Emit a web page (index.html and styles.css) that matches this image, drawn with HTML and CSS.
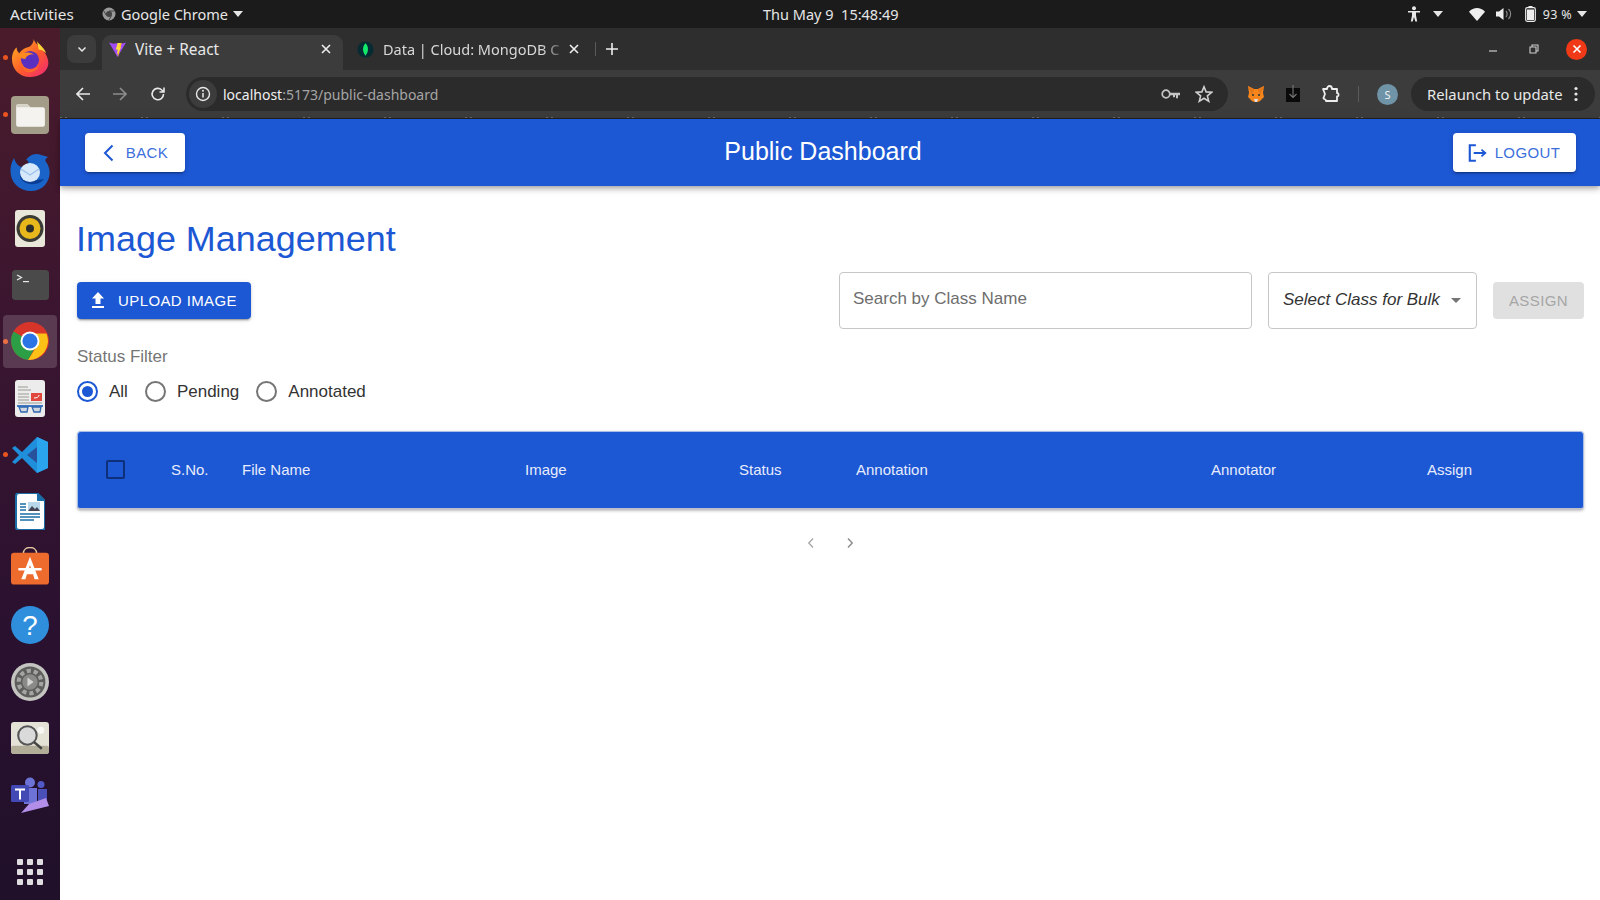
FILE: index.html
```html
<!DOCTYPE html>
<html lang="en">
<head>
<meta charset="utf-8">
<title>Vite + React</title>
<link rel="stylesheet" href="styles.css">
</head>
<body>
<div class="screen">
  <header class="topbar">
    <span class="activities">Activities</span>
    <span class="appmenu">
      <svg class="ic14" viewBox="0 0 14 14"><circle cx="7" cy="7" r="6.5" fill="#9a9a9a"/><circle cx="7" cy="7" r="3" fill="#444"/><path d="M7 4h5.5M9.5 8.5 7 13M4.4 8.5 1.6 3.6" stroke="#444" stroke-width="1"/></svg>
      <span>Google Chrome</span>
      <i class="caret"></i>
    </span>
    <time class="clock">Thu May 9&nbsp; 15:48:49</time>
    <span class="tray">
      <svg class="person" viewBox="0 0 14 16"><circle cx="7" cy="2.2" r="2" fill="#e8e8e8"/><path d="M1 5h12v1.6H9v3l1.2 6H8.3L7 11l-1.3 4.600H3.800L5 9.600v-3H1z" fill="#e8e8e8"/></svg>
      <i class="caret caret-a"></i>
      <svg class="wifi" viewBox="0 0 16 13"><path d="M0 3.800C4.500-1.200 11.500-1.200 16 3.800L8 13z" fill="#eee"/></svg>
      <svg class="speaker" viewBox="0 0 17 14"><path d="M0 4.500h3L7.500 1v12L3 9.500H0z" fill="#eee"/><path d="M10 4c1.500 1.600 1.500 4.400 0 6M12.500 2c2.800 2.800 2.800 7.200 0 10" stroke="#888" stroke-width="1.200" fill="none"/></svg>
      <svg class="battery" viewBox="0 0 11 16"><rect x=".7" y="1.700" width="9.600" height="13.600" rx="1.500" fill="none" stroke="#eee" stroke-width="1.200"/><rect x="3.500" y="0" width="4" height="2" fill="#eee"/><rect x="2" y="3.500" width="7" height="10.500" fill="#eee"/></svg>
      <span class="batt">93 %</span>
      <i class="caret caret-b"></i>
    </span>
  </header>

  <div class="desktop">
    <nav class="dock">
      <div class="dock-item has-dot">
        <svg viewBox="0 0 40 40"><defs><linearGradient id="ffa" x1="0" y1="0" x2="1" y2="1"><stop offset="0" stop-color="#ffb51f"/><stop offset=".55" stop-color="#ff5a2c"/><stop offset="1" stop-color="#f0257a"/></linearGradient></defs><path d="M24 0c1 5 6 7 9 11 6 7 7 13 6 17-2 8-10 12-19 12C9 40 1 32 1 21 1 16 3 11 6 9c0 3 1 5 3 6 2-4 7-6 11-7 2-2 4-5 4-8z" fill="url(#ffa)"/><path d="M27 2c3 4 8 7 10 13-3-3-6-4-8-4 0-3-1-6-2-9z" fill="#ffd43a"/><circle cx="20" cy="22" r="9.500" fill="#5b2fc0"/><path d="M7 17c5-3 12-4 17-1-5 0-8 2-9 5-3 0-6-2-8-4z" fill="#ff8a1f"/><path d="M11 24c1 6 7 9 12 8 4-1 6-4 6-7 1 6-4 10-10 10-5 0-9-5-8-11z" fill="#ff6a2a"/></svg>
      </div>
      <div class="dock-item has-dot">
        <svg viewBox="0 0 37 37"><rect width="37" height="37" rx="4" fill="#a39c89"/><path d="M5 10a2 2 0 0 1 2-2h9l3 3h12a2 2 0 0 1 2 2v15a2 2 0 0 1-2 2H7a2 2 0 0 1-2-2z" fill="#f5f3ef"/><path d="M5 10a2 2 0 0 1 2-2h9l3 3H5z" fill="#d6d2c8"/></svg>
      </div>
      <div class="dock-item">
        <svg class="drop2" viewBox="0 0 40 38"><path d="M4 4C-1 12-1 24 6 31c8 8 22 8 29 0 6-7 6-17 1-23-1-2-1-3 2-5-4-1-8-3-12-3-4 0-8 3-10 6 5 1 1 7-3 7-5 0-8-5-9-9z" fill="#1a63c9"/><path d="M12 16c3 6 10 12 22 9-4 6-15 7-21 2-4-3-4-8-1-11z" fill="#0a3e96"/><ellipse cx="20" cy="18.500" rx="10" ry="9.500" fill="#d6e8fa"/><path d="M11 15l9 6 9-6" fill="none" stroke="#9cc2ec" stroke-width="1.300"/></svg>
      </div>
      <div class="dock-item">
        <svg class="w30" viewBox="0 0 30 37"><rect width="30" height="37" rx="3" fill="#e9e6da"/><circle cx="15" cy="18.500" r="13.500" fill="#3a3a36"/><circle cx="15" cy="18.500" r="10.500" fill="#e8b71b"/><circle cx="15" cy="18.500" r="4" fill="#2c2c28"/></svg>
      </div>
      <div class="dock-item">
        <svg class="h30" viewBox="0 0 37 30"><rect width="37" height="30" rx="3.500" fill="#4a4a4a"/><path d="M5 5l4.500 2.500L5 10" fill="none" stroke="#e8e8e8" stroke-width="1.200"/><rect x="11" y="11" width="6" height="1.200" fill="#e8e8e8"/></svg>
      </div>
      <div class="dock-item active has-dot">
        <svg viewBox="0 0 40 40"><circle cx="20" cy="20" r="20" fill="#d8352a"/><path d="M2.700 10 12 27 20 20 2.700 10zM2.700 10A20 20 0 0 0 18 39.900L27 24 12 27z" fill="#2c9e46"/><path d="M20 12h17.300A20 20 0 0 1 18 39.900L28 24z" fill="#fbc116"/><circle cx="20" cy="20" r="10" fill="#fff"/><circle cx="20" cy="20" r="8" fill="#2a74e6"/></svg>
      </div>
      <div class="dock-item">
        <svg class="w30" viewBox="0 0 30 37"><rect width="30" height="37" rx="3" fill="#ececec"/><path d="M3 7h10M3 10h13M3 14h11M3 17h11M3 20h11M3 23h24" stroke="#9a9a94" stroke-width="1"/><rect x="16" y="13" width="11" height="8" fill="#e0483e"/><path d="M19 18c3 0 5-1 5-3" stroke="#fff" fill="none"/><rect x="2" y="25" width="26" height="2" fill="#3f78c0"/><path d="M4 27h9l-1 5H6zM17 27h9l-1 5h-6z" fill="#cfd8e0" stroke="#2f66ae" stroke-width="1.300"/></svg>
      </div>
      <div class="dock-item has-dot">
        <svg class="w36" viewBox="0 0 36 36"><path d="M25 0 36 5v26l-11 5L10 21 3 27 0 25l7-7-7-7 3-2 7 6z" fill="#1f8fdc"/><path d="M25 0 36 5v26l-11 5z" fill="#2aa4ec"/><path d="M25 10v16l-10-8z" fill="#31115a" opacity=".5"/></svg>
      </div>
      <div class="dock-item">
        <svg class="w30" viewBox="0 0 30 37"><path d="M1 3a3 3 0 0 1 3-3h18l8 8v26a3 3 0 0 1-3 3H4a3 3 0 0 1-3-3z" fill="#fff" stroke="#1a6ea5" stroke-width="2"/><path d="M22 0v8h8z" fill="#1a6ea5"/><path d="M5 11h6M5 14h6M5 17h6M5 21h20M5 24h20M5 27h14" stroke="#1a6ea5" stroke-width="1.500"/><rect x="13" y="9" width="12" height="9" fill="#b9d7ea"/><path d="M13 18l4-5 3 3 2-2 3 4z" fill="#445"/></svg>
      </div>
      <div class="dock-item">
        <svg class="lift" viewBox="0 0 37 36"><path d="M12 6c0-8 13-8 13 0" fill="none" stroke="#e5c9a0" stroke-width="1.500"/><rect y="5" width="37" height="31" rx="3" fill="#ee6b2e"/><path d="M18.500 9 10 31h4l1.500-5h6l1.500 5h4zM17 22l1.500-5 1.500 5z" fill="#fff"/><rect x="7" y="20" width="23" height="2.500" rx="1" fill="#fff"/></svg>
      </div>
      <div class="dock-item">
        <svg viewBox="0 0 37 37"><circle cx="18.500" cy="18.500" r="18.500" fill="#2f8fdc"/><text x="18.500" y="28" class="helpq" text-anchor="middle">?</text></svg>
      </div>
      <div class="dock-item">
        <svg viewBox="0 0 37 37"><circle cx="18.500" cy="18.500" r="18.500" fill="#c4c4c0"/><circle cx="18.500" cy="18.500" r="15" fill="#5e5e5c"/><circle cx="18.500" cy="18.500" r="11" fill="none" stroke="#a5a5a2" stroke-width="4" stroke-dasharray="4 2.900"/><circle cx="18.500" cy="18.500" r="7.500" fill="#8a8a88"/><path d="M16 14l6 4.500-6 4.500z" fill="#d4d4d0"/></svg>
      </div>
      <div class="dock-item">
        <svg viewBox="0 0 37 31"><rect width="37" height="31" rx="3" fill="#e4e1d6"/><rect y="23" width="37" height="8" rx="2" fill="#b2ad99"/><circle cx="16" cy="13" r="9" fill="#dadada" stroke="#555" stroke-width="2"/><path d="M22.500 19.500 30 26" stroke="#444" stroke-width="2.500"/><circle cx="29" cy="8" r="3.500" fill="#fff" opacity=".7"/></svg>
      </div>
      <div class="dock-item">
        <svg viewBox="0 0 38 36"><circle cx="19" cy="5.500" r="5" fill="#6c72d6"/><circle cx="30" cy="7.500" r="3.500" fill="#5158c8"/><path d="M13 11h13v16H13z" fill="#6c72d6"/><path d="M27 12h9v12h-9z" fill="#4a50b8"/><rect y="8" width="18" height="17" rx="1.500" fill="#4349b4"/><path d="M4 11.500h10v2H10v9H8v-9H4z" fill="#fff"/><path d="M10 36 38 29 35 21 18 27z" fill="#b28ee8"/></svg>
      </div>
      <div class="dock-grid">
        <i></i><i></i><i></i><i></i><i></i><i></i><i></i><i></i><i></i>
      </div>
    </nav>

    <div class="browser">
      <div class="tabstrip">
        <span class="tabmenu"><svg class="ic10" viewBox="0 0 10 10"><path d="M1.500 3.500 5 7l3.500-3.500" fill="none" stroke="#e8e8e8" stroke-width="1.500"/></svg></span>
        <div class="tab tab-active">
          <svg class="fav" viewBox="0 0 18 18"><path d="M0 1.500 9 17 18 1.500 13 3 9 2 5 3z" fill="#a14bf5"/><path d="M9 2h4.500L9.500 17z" fill="#ffc517"/><path d="M9.500 2 7 9h2.500L8 15l5-8.500H10.500L12 2z" fill="#ffdf3a"/></svg>
          <span class="tab-title">Vite + React</span>
          <svg class="tabx" viewBox="0 0 10 10"><path d="M1 1l8 8M9 1 1 9" stroke="#eee" stroke-width="1.600"/></svg>
        </div>
        <div class="tab tab-other">
          <svg class="fav" viewBox="0 0 18 18"><circle cx="9" cy="9" r="8.500" fill="#062b33"/><path d="M9 2.500c3.500 3.500 3.500 9 0 13-3.500-4-3.500-9.500 0-13z" fill="#13e86b"/></svg>
          <span class="tab-title faded">Data | Cloud: MongoDB C</span>
          <svg class="tabx" viewBox="0 0 10 10"><path d="M1 1l8 8M9 1 1 9" stroke="#eee" stroke-width="1.600"/></svg>
        </div>
        <svg class="newtab" viewBox="0 0 12 12"><path d="M6 0v12M0 6h12" stroke="#eee" stroke-width="1.600"/></svg>
        <div class="winctl">
          <svg class="ic10" viewBox="0 0 10 10"><path d="M1 7h8" stroke="#ccc" stroke-width="1.200"/></svg>
          <svg class="ic10" viewBox="0 0 10 10"><path d="M3 3V1h6v6H7M1 3h6v6H1z" fill="none" stroke="#ccc" stroke-width="1.100"/></svg>
          <span class="winclose"><svg class="ic10" viewBox="0 0 10 10"><path d="M1.500 1.500l7 7M8.500 1.500l-7 7" stroke="#fff" stroke-width="1.600"/></svg></span>
        </div>
      </div>

      <div class="toolbar">
        <svg class="nav-ic" viewBox="0 0 16 16"><path d="M15 8H2M8 2 2 8l6 6" fill="none" stroke="#e8e8e8" stroke-width="1.700"/></svg>
        <svg class="nav-ic" viewBox="0 0 16 16"><path d="M1 8h13M8 2l6 6-6 6" fill="none" stroke="#8c8c8c" stroke-width="1.700"/></svg>
        <svg class="nav-ic nudge" viewBox="0 0 16 16"><path d="M13.500 8A5.700 5.700 0 1 1 11.800 4L14 6M14 1.500V6H9.500" fill="none" stroke="#e8e8e8" stroke-width="1.600"/></svg>
        <div class="omnibox">
          <span class="sitechip"><svg class="ic16" viewBox="0 0 16 16"><circle cx="8" cy="8" r="6.500" fill="none" stroke="#e8e8e8" stroke-width="1.400"/><path d="M8 7v4.500" stroke="#e8e8e8" stroke-width="1.500"/><circle cx="8" cy="4.800" r="1" fill="#e8e8e8"/></svg></span>
          <span class="url"><b>localhost</b>:5173/public-dashboard</span>
          <svg class="key" viewBox="0 0 20 12"><circle cx="5" cy="6" r="3.800" fill="none" stroke="#c4c4c4" stroke-width="1.700"/><path d="M9 4.800h10v2.400h-2v3h-2v-3h-1v2h-2v-2H9z" fill="#c4c4c4"/></svg>
          <svg class="star" viewBox="0 0 18 18"><path d="M9 1.800 11.100 6.900 16.600 7.300 12.400 10.900 13.700 16.200 9 13.300 4.300 16.200 5.600 10.900 1.400 7.300 6.900 6.900z" fill="none" stroke="#d0d0d0" stroke-width="1.600"/></svg>
        </div>
        <svg class="ext fox" viewBox="0 0 18 18"><path d="M1 1l6 3h4l6-3-1 7 1 4-4 4-2 1H7l-2-1-4-4 1-4z" fill="#f6851b"/><path d="M1 1l6 3-2 6zM17 1l-6 3 2 6z" fill="#e2761b"/><path d="M7 14h4l-1 3H8z" fill="#ddd"/><circle cx="6" cy="10" r="1" fill="#233"/><circle cx="12" cy="10" r="1" fill="#233"/></svg>
        <svg class="ext dl" viewBox="0 0 18 18"><rect x="2" y="3" width="14" height="14" fill="#0a0a0a"/><path d="M9 0v12M5.500 9 9 12.500 12.500 9" fill="none" stroke="#777" stroke-width="1.100"/></svg>
        <svg class="ext puzzle" viewBox="0 0 20 20"><path d="M3 5h4c0-4 5-4 5 0h5v4c2-.5 2 4 0 3.500V17H6c.5-2-3-2-2.500-3L5 10z" fill="none" stroke="#eee" stroke-width="1.800" stroke-linejoin="round"/></svg>
        <i class="tdiv"></i>
        <span class="avatar">S</span>
        <div class="relaunch">
          <span>Relaunch to update</span>
          <svg class="dots" viewBox="0 0 4 16"><circle cx="2" cy="2.500" r="1.600" fill="#e8e8e8"/><circle cx="2" cy="8" r="1.600" fill="#e8e8e8"/><circle cx="2" cy="13.500" r="1.600" fill="#e8e8e8"/></svg>
        </div>
      </div>

      <main class="page">
        <div class="appbar">
          <button class="btn btn-white btn-back">
            <svg class="back-ic" viewBox="0 0 12 18"><path d="M10.500 1.500 3 9l7.500 7.500" fill="none" stroke="#1c57d4" stroke-width="2"/></svg>
            BACK
          </button>
          <div class="appbar-title">Public Dashboard</div>
          <button class="btn btn-white btn-logout">
            <svg class="logout-ic" viewBox="0 0 18 18"><path d="M8 2H2.500v14H8" fill="none" stroke="#1c57d4" stroke-width="1.900"/><path d="M6 9h10M13 6l3.500 3-3.500 3" fill="none" stroke="#1c57d4" stroke-width="1.600"/></svg>
            LOGOUT
          </button>
        </div>

        <div class="content">
          <h1 class="heading">Image Management</h1>
          <div class="actions">
            <button class="btn btn-blue">
              <svg class="up-ic" viewBox="0 0 14 16"><path d="M7 0 13 6.500H9.500V12h-5V6.500H1zM1 14h12v2H1z" fill="#fff"/></svg>
              UPLOAD IMAGE
            </button>
            <div class="actions-right">
              <div class="field field-search">Search by Class Name</div>
              <div class="field field-select"><em>Select Class for Bulk</em><i class="drop"></i></div>
              <button class="btn btn-disabled">ASSIGN</button>
            </div>
          </div>

          <div class="filter-label">Status Filter</div>
          <div class="radios">
            <label class="radio on"><i class="dot"></i>All</label>
            <label class="radio"><i class="dot"></i>Pending</label>
            <label class="radio"><i class="dot"></i>Annotated</label>
          </div>

          <div class="table">
            <div class="cell cell-check"><i class="check"></i></div>
            <div class="cell">S.No.</div>
            <div class="cell">File Name</div>
            <div class="cell">Image</div>
            <div class="cell">Status</div>
            <div class="cell">Annotation</div>
            <div class="cell">Annotator</div>
            <div class="cell">Assign</div>
          </div>

          <div class="pager">
            <svg class="pg" viewBox="0 0 10 12"><path d="M7 1.500 2.800 6 7 10.500" fill="none" stroke="#a8a8a8" stroke-width="1.400"/></svg>
            <svg class="pg" viewBox="0 0 10 12"><path d="M3 1.500 7.200 6 3 10.500" fill="none" stroke="#8a8a8a" stroke-width="1.400"/></svg>
          </div>
        </div>
      </main>
    </div>
  </div>
</div>
</body>
</html>
```

FILE: styles.css
```css
* { box-sizing: border-box; }
html, body { margin: 0; height: 100%; overflow: hidden; }
body { font-family: "Liberation Sans", Arial, sans-serif; background: #fff; }
.screen { width: 1600px; height: 900px; display: flex; flex-direction: column; }

/* GNOME top bar */
.topbar { height: 28px; flex: none; background: #1b1b1b; color: #e6e6e6; display: flex; align-items: center; padding-left: 10px; font-family: "Noto Sans", sans-serif; font-size: 14.500px; }
.activities { width: 92px; flex: none; font-size: 15.300px; }
.appmenu { display: flex; align-items: center; gap: 5px; flex: none; }
.ic14 { width: 14px; height: 14px; }
.caret { display: inline-block; width: 0; height: 0; border-left: 5.500px solid transparent; border-right: 5.500px solid transparent; border-top: 6px solid #e6e6e6; }
.clock { margin-left: 520px; width: 150px; flex: none; white-space: nowrap; }
.tray { margin-left: auto; display: flex; align-items: center; padding-right: 13px; }
.person { width: 14px; height: 16px; }
.caret-a { margin-left: 12px; }
.wifi { width: 16px; height: 13px; margin-left: 26px; }
.speaker { width: 17px; height: 14px; margin-left: 11px; }
.battery { width: 11px; height: 16px; margin-left: 12px; }
.batt { margin-left: 7px; font-size: 12.500px; letter-spacing: .3px; }
.caret-b { margin-left: 5px; }

.desktop { flex: 1; display: flex; min-height: 0; }

/* Dock */
.dock { width: 60px; flex: none; display: flex; flex-direction: column; padding-top: 1.650px; background: linear-gradient(180deg, #4a1c2b 0%, #3a1530 35%, #2a1130 70%, #201029 100%); }
.dock-item { height: 56.700px; flex: none; display: flex; align-items: center; justify-content: center; position: relative; }
.dock-item svg { width: 38px; height: 38px; }
.dock-item svg.w30 { width: 30px; height: 37px; }
.dock-item svg.h30 { width: 37px; height: 30px; }
.dock-item svg.w36 { width: 36px; height: 36px; }
.dock-item svg.lift { margin-bottom: 5px; }
.dock-item svg.drop2 { width: 40px; height: 38px; margin-top: 3px; }
.has-dot::before { content: ""; position: absolute; left: 3px; top: 50%; width: 5px; height: 5px; margin-top: -2.500px; border-radius: 50%; background: #e95420; }
.dock-item.active::after { content: ""; position: absolute; left: 3px; right: 3px; top: 2px; bottom: 2px; border-radius: 4px; background: rgba(255,255,255,.16); z-index: 0; }
.dock-item.active svg { position: relative; z-index: 1; }
.helpq { font-family: "Liberation Sans", sans-serif; font-size: 27px; fill: #fff; }
.dock-grid { margin: auto auto 15px; display: grid; grid-template-columns: repeat(3, 6px); gap: 4px; }
.dock-grid i { width: 6px; height: 6px; border-radius: 1px; background: #e0dde0; }

/* Browser */
.browser { flex: 1; min-width: 0; display: flex; flex-direction: column; }
.tabstrip { height: 42px; flex: none; background: #2e2e2e; display: flex; align-items: flex-end; padding-left: 7px; color: #e8e8e8; font-family: "Noto Sans", sans-serif; font-size: 14.500px; }
.tabmenu { width: 29px; height: 28px; margin-bottom: 7px; border-radius: 8px; background: #3c3c3c; display: flex; align-items: center; justify-content: center; flex: none; }
.ic10 { width: 10px; height: 10px; }
.tab { height: 35px; display: flex; align-items: center; flex: none; position: relative; padding-bottom: 7px; }
.tab-active { width: 241px; margin-left: 6px; background: #3c3c3c; border-radius: 9px 9px 0 0; padding-left: 7px; padding-right: 12px; font-size: 15.400px; }
.tab-other { width: 252px; padding-left: 14px; padding-right: 16px; }
.fav { width: 17px; height: 17px; flex: none; }
.tab-title { margin-left: 9px; flex: 1; white-space: nowrap; overflow: hidden; }
.faded { color: #d8d8d8; -webkit-mask-image: linear-gradient(90deg, #000 85%, transparent 100%); mask-image: linear-gradient(90deg, #000 85%, transparent 100%); }
.tabx { width: 10px; height: 10px; flex: none; }
.newtab { width: 12px; height: 12px; margin: 0 0 15px 11px; flex: none; }
.tab-other::after { content: ""; position: absolute; right: -0.500px; top: 7px; bottom: 14px; width: 1px; background: #5a5a5a; }
.winctl { margin-left: auto; margin-right: 13px; display: flex; align-items: center; align-self: stretch; gap: 31px; }
.winclose { width: 21px; height: 21px; border-radius: 50%; background: #f03a17; display: flex; align-items: center; justify-content: center; margin-left: -4px; }

.toolbar { height: 49px; flex: none; background: #3c3c3c; display: flex; align-items: center; padding-left: 15px; color: #e8e8e8; border-bottom: 1px solid #222; background-image: repeating-linear-gradient(90deg, #6a6a6a 0 2px, transparent 2px 5px, #6a6a6a 5px 7px, transparent 7px 81px); background-size: 100% 1px; background-repeat: no-repeat; background-position: 0 47px; font-family: "Noto Sans", sans-serif; }
.nav-ic { width: 16px; height: 16px; flex: none; margin-right: 21px; }
.nudge { margin-left: 1px; }
.omnibox { width: 1042px; height: 34px; margin-left: -1px; flex: none; border-radius: 17px; background: #2b2b2b; display: flex; align-items: center; font-size: 14px; padding-right: 15px; }
.sitechip { width: 28px; height: 28px; margin-left: 3px; border-radius: 50%; background: #3c3c3c; display: flex; align-items: center; justify-content: center; flex: none; }
.ic16 { width: 16px; height: 16px; }
.url { margin-left: 6px; color: #a5a5a5; flex: 1; white-space: nowrap; }
.url b { font-weight: 400; color: #f0f0f0; }
.key { width: 20px; height: 12px; flex: none; }
.star { width: 18px; height: 18px; margin-left: 14px; flex: none; }
.ext { flex: none; }
.fox { width: 18px; height: 18px; margin-left: 19px; }
.dl { width: 18px; height: 18px; margin-left: 19px; }
.puzzle { width: 20px; height: 20px; margin-left: 18px; }
.tdiv { width: 1px; height: 16px; background: #5c5c5c; margin-left: 18px; flex: none; }
.avatar { width: 21px; height: 21px; margin-left: 18px; border-radius: 50%; background: #6f93a7; color: #f2f2f2; font-size: 11px; display: flex; align-items: center; justify-content: center; flex: none; }
.relaunch { width: 184px; height: 34px; margin-left: 13px; flex: none; border-radius: 17px; background: #2b2b2b; display: flex; align-items: center; justify-content: space-between; padding: 0 17px 0 16px; font-size: 14.800px; white-space: nowrap; }
.dots { width: 4px; height: 16px; }

/* Page */
.page { flex: 1; background: #fff; min-height: 0; }
.appbar { height: 67px; background: #1c57d4; display: flex; align-items: center; justify-content: space-between; padding: 0 24px 0 25px; position: relative; z-index: 1; box-shadow: 0 2px 4px -1px rgba(0,0,0,.2), 0 4px 5px 0 rgba(0,0,0,.14), 0 1px 10px 0 rgba(0,0,0,.12); }
.appbar-title { color: #fff; font-size: 25px; line-height: 1; padding-left: 8px; margin-top: -3px; }
.btn { font-family: "Liberation Sans", sans-serif; border: 0; border-radius: 4px; display: inline-flex; align-items: center; justify-content: center; font-size: 15px; font-weight: 400; letter-spacing: .4px; height: 39px; padding: 0 8px; flex: none; white-space: nowrap; }
.btn-white { background: #fff; color: #3d6fdc; box-shadow: 0 3px 1px -2px rgba(0,0,0,.2), 0 2px 2px 0 rgba(0,0,0,.14), 0 1px 5px 0 rgba(0,0,0,.12); }
.btn-back { width: 100px; }
.btn-logout { width: 123px; padding-right: 10px; }
.back-ic { width: 12px; height: 18px; margin-right: 12px; }
.logout-ic { width: 20px; height: 20px; margin-right: 8px; }
.content { padding: 32px 16px 0 17px; }
.heading { margin: 0 0 -1px -1px; font-size: 35.950px; font-weight: 400; line-height: 42px; color: #1c57d4; }
.actions { display: flex; align-items: center; justify-content: space-between; margin-top: 12px; padding-top: 1px; }
.btn-blue { width: 174px; height: 37px; padding-bottom: 1px; background: #1c57d4; color: #fff; box-shadow: 0 3px 1px -2px rgba(0,0,0,.2), 0 2px 2px 0 rgba(0,0,0,.14), 0 1px 5px 0 rgba(0,0,0,.12); }
.up-ic { width: 14px; height: 16px; margin-right: 13px; }
.actions-right { display: flex; align-items: center; }
.field { height: 57px; border: 1px solid #c6c6c6; border-radius: 4px; display: flex; align-items: center; font-size: 17px; padding: 0 14px; }
.field-search { width: 413px; color: #6e6e6e; padding-bottom: 3px; padding-left: 13px; }
.field-select { width: 209px; margin-left: 16px; color: #333; justify-content: space-between; padding-right: 15px; padding-bottom: 2px; }
.drop { width: 0; height: 0; border-left: 5px solid transparent; border-right: 5px solid transparent; border-top: 5px solid #757575; margin-top: 2px; }
.btn-disabled { width: 91px; height: 37px; padding-bottom: 1px; margin-left: 16px; background: #e0e0e0; color: #a6a6a6; }
.filter-label { margin-top: 16px; font-size: 17px; line-height: 24px; color: #757575; }
.radios { display: flex; height: 41px; margin-top: 2px; }
.radio { display: flex; align-items: center; font-size: 17px; color: #333; margin-right: 17px; }
.dot { width: 21px; height: 21px; margin-right: 11px; border: 2px solid #757575; border-radius: 50%; position: relative; flex: none; }
.radio.on .dot { border-color: #1c57d4; }
.radio.on .dot::after { content: ""; position: absolute; left: 3px; top: 3px; width: 11px; height: 11px; border-radius: 50%; background: #1c57d4; }
.table { margin-top: 19px; height: 79px; padding-bottom: 1px; background: #1c57d4; border-radius: 4px; border: 1px solid #a9bde9; border-bottom: 2px solid #c0c0ca; display: grid; grid-template-columns: 77px 71px 283px 214px 117px 355px 216px 172px; align-items: center; color: #e6ecfb; font-size: 15px; box-shadow: 0 1px 3px rgba(0,0,0,.25); }
.cell { padding-left: 16px; }
.cell-check { padding-left: 28px; display: flex; }
.check { width: 19px; height: 19px; border: 2px solid #0e2f7a; border-radius: 2px; }
.pager { display: flex; justify-content: center; gap: 29px; margin-top: 27px; }
.pg { width: 10px; height: 12px; }
```
